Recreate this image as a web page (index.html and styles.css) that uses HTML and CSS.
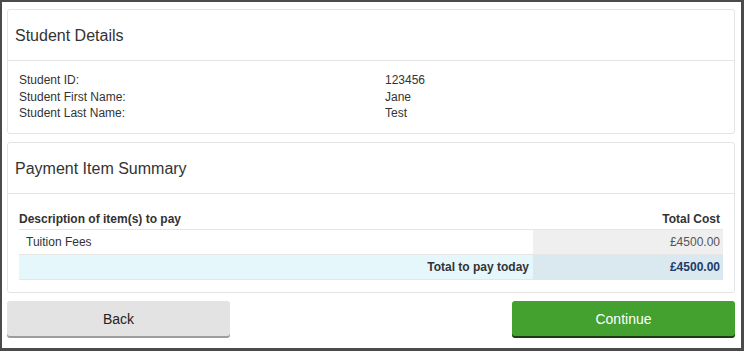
FILE: index.html
```html
<!DOCTYPE html>
<html lang="en">

<head>
    <meta charset="UTF-8" />
    <meta name="viewport" content="width=device-width, initial-scale=1.0" />
    <title>Payment Summary</title>
    <link rel="stylesheet" href="styles.css">
</head>

<body>
    <div class="frame">
        <div class="panel">
            <div class="panel-heading">Student Details</div>
            <div class="panel-body details">
                <span>Student ID:</span><span>123456</span>
                <span>Student First Name:</span><span>Jane</span>
                <span>Student Last Name:</span><span>Test</span>
            </div>
        </div>
        <div class="panel">
            <div class="panel-heading">Payment Item Summary</div>
            <div class="panel-body items">
                <table class="summary">
                    <thead>
                        <tr>
                            <th class="desc">Description of item(s) to pay</th>
                            <th class="cost">Total Cost</th>
                        </tr>
                    </thead>
                    <tbody>
                        <tr>
                            <td class="desc">Tuition Fees</td>
                            <td class="cost active">£4500.00</td>
                        </tr>
                        <tr class="info">
                            <td class="total-label">Total to pay today</td>
                            <td class="cost total">£4500.00</td>
                        </tr>
                    </tbody>
                </table>
            </div>
        </div>
        <div class="actions">
            <button class="btn back">Back</button>
            <button class="btn continue">Continue</button>
        </div>
    </div>
</body>

</html>
```

FILE: styles.css
```css
* {
    margin: 0;
    padding: 0;
    box-sizing: border-box;
    font-family: 'Liberation Sans', Arial, sans-serif;
}

body {
    background: #ffffff;
    color: #333333;
}

.frame {
    height: 351px;
    border: solid #4b4b4b;
    border-width: 2px 3px 3px 2px;
    padding: 7px 6px 0 5px;
}

.panel {
    border: 1px solid #e4e4e4;
    border-radius: 3px;
    background: #ffffff;
    margin-bottom: 8px;
}

.panel-heading {
    font-size: 16px;
    line-height: 20px;
    padding: 16px 7px 14px 7px;
    border-bottom: 1px solid #e4e4e4;
    color: #333333;
}

.panel-body {
    padding: 11px 11px 12px 11px;
}

.details {
    display: grid;
    grid-template-columns: 366px 1fr;
    font-size: 12px;
    line-height: 16.5px;
    padding-bottom: 11px;
}

.items {
    padding-top: 12px;
}

.summary {
    width: 100%;
    border-collapse: collapse;
    font-size: 12px;
}

.summary th {
    font-weight: bold;
    height: 24px;
    padding: 0 3px 3px 0;
    vertical-align: bottom;
    border-bottom: 1px solid #e6e6e6;
}

.summary td {
    height: 25px;
    padding: 0 3px 0 7px;
    border-top: 1px solid #e6e6e6;
}

.summary .desc {
    text-align: left;
}

.summary th.desc {
    padding-left: 0;
}

.summary .cost {
    text-align: right;
    width: 190px;
}

.summary .active {
    background: #efefef;
    color: #555555;
}

.summary .info td {
    background: #e6f7fb;
    border-bottom: 1px solid #e6e6e6;
}

.summary .total-label {
    text-align: right;
    font-weight: bold;
    padding-right: 4px;
}

.summary .info .total {
    background: #d9e9ef;
    color: #1d3b6b;
    font-weight: bold;
}

.actions {
    display: flex;
    justify-content: space-between;
}

.btn {
    width: 223px;
    height: 35px;
    border: none;
    border-radius: 3px;
    font-size: 14px;
    cursor: pointer;
}

.back {
    background: #e3e3e3;
    color: #222222;
    box-shadow: 0 2px 0 #9d9d9d;
}

.continue {
    background: #44a02f;
    color: #ffffff;
    box-shadow: 0 2px 0 #1d3a14;
}
```
